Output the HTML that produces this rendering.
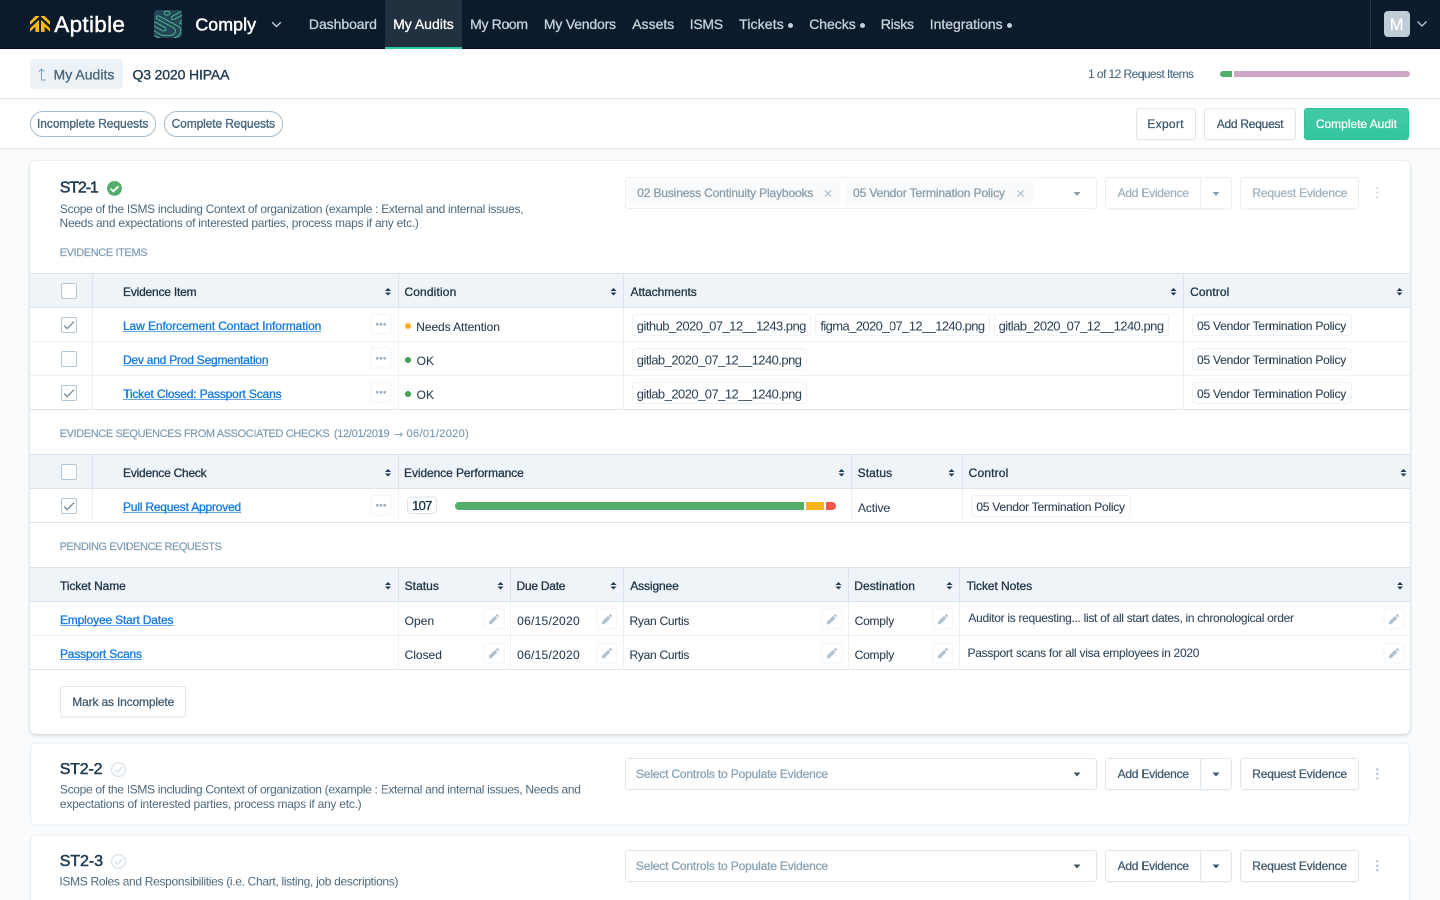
<!DOCTYPE html>
<html lang="en"><head>
<meta charset="utf-8">
<title>Q3 2020 HIPAA - Aptible Comply</title>
<style>
*{box-sizing:border-box;margin:0;padding:0}
html,body{width:1440px;height:900px;overflow:hidden}
body{background:#f9fbfc;position:relative}
#p{position:absolute;left:0;top:0;width:2880px;height:1800px;transform:scale(.5);transform-origin:0 0;will-change:transform}
#z{zoom:2;position:absolute;left:0;top:0;width:1440px;height:900px;overflow:hidden;font-family:"Liberation Sans",Arial,sans-serif;font-size:12px;color:#213547;background:#f9fbfc}
a{color:#1279e0;text-decoration:none;background:linear-gradient(#2f8ae4,#2f8ae4) 0 12px/100% .75px no-repeat}
.t{position:absolute;white-space:nowrap;line-height:normal;left:0;top:0;-webkit-text-stroke:0.3px}
svg{position:absolute;overflow:visible}
i{position:absolute;display:block}
/* NAV */
#nav{position:absolute;left:0;top:0;width:1440px;height:49px;background:#0b1b2b;border-bottom:1px solid #030a1c}
#nav .brand{font-size:22.4px;color:#fff;-webkit-text-stroke:0.45px}
#nav .prod{font-size:17.8px;color:#fff;-webkit-text-stroke:0.5px}
#nav .n{font-size:14px;color:#c7d1da}
#nav .tab{position:absolute;left:385px;top:0;width:77px;height:49px;background:#223140;border-bottom:2px solid #2cc8a0}
#nav .tab .n{color:#fff}
#nav .bul{width:5px;height:5px;border-radius:3px;background:#c7d1da;top:23px}
#nav .div{left:1370px;top:0;width:1px;height:48px;background:#1c3a55}
#nav .av{position:absolute;left:1384px;top:11px;width:26px;height:26px;border-radius:4px;background:#bfccd6}
#nav .av .t{color:#fff;font-size:16.5px;-webkit-text-stroke:.2px}
/* SUBHEADER */
#sub{position:absolute;left:0;top:49px;width:1440px;height:50px;background:#fff;border-bottom:1px solid #dde6ed}
#sub .back{position:absolute;left:30px;top:10px;width:93px;height:30px;border-radius:4px;background:#edf2f7}
#sub .back .t{font-size:14px;color:#47667e}
#sub .title{font-size:14px;color:#1e384e;-webkit-text-stroke:.35px}
#sub .cnt{font-size:12px;color:#4a6a82;-webkit-text-stroke:.1px}
#sub .pg{left:1220px;top:22px;height:6px}
/* TOOLBAR */
#tool{position:absolute;left:0;top:99px;width:1440px;height:50px;background:#fff;border-bottom:1px solid #dde6ed}
.pill{position:absolute;top:12px;height:26px;border:1px solid #a9bccb;border-radius:13px;background:#fff}
.pill .t{color:#47667e}
.btn{position:absolute;height:32px;border:1px solid #dde6ed;border-radius:3px;background:#fff;box-shadow:0 1px 1px rgba(30,60,90,.04)}
.btn .t{color:#3d586e;-webkit-text-stroke:.25px}
.btn.primary{background:linear-gradient(#42caa5,#32c59f);border-color:#30c39c}
.btn.primary .t{color:#fff}
.btn.dis{border-color:#eaeff4}
.btn.dis .t{color:#9fb0be}
.btn .sep{top:0;width:1px;height:30px;background:#dde6ed}
.btn.dis .sep{background:#eaeff4}
/* CARDS */
.card{position:absolute;left:30px;width:1380px;background:#fff;border-radius:6px;border:1px solid #e9eef3}
.card h2{font-size:16px;font-weight:normal;color:#1e3a51;-webkit-text-stroke:.5px}
.card .desc{font-size:12px;color:#4d697f;-webkit-text-stroke:0}
.lbl{font-size:11px;color:#7b99b1;-webkit-text-stroke:.15px}
.sel{position:absolute;left:594px;width:472px;height:32px;border:1px solid #dde6ed;border-radius:3px;background:#fff}
.sel.dis{border-color:#eaeff4}
.sel .ph{color:#8ba3b6}
.sel .tag{position:absolute;top:3px;height:24px;background:#f8fafb;border-radius:2px}
.sel .tag .t{color:#8b9dab}
.caret{width:0;height:0;border-left:3.5px solid transparent;border-right:3.5px solid transparent;border-top:4px solid #3f566a}
.dis .caret{border-top-color:#8b9dab}
.kb{width:2.5px;height:2.5px;border-radius:1.25px;background:#b9c7d3}
/* TABLES */
.th{position:absolute;left:0;top:0;width:1380px;height:35px;background:#eff4f8;border:1px solid #dbe4ec;border-left:0;border-right:0}
.th .t{color:#213547}
.th .v{top:0;width:1px;height:33px;background:#dbe4ec}
.tr{position:absolute;left:0;width:1380px;height:34px;border-bottom:1px solid #edf1f5}
.tr.last{border-bottom-color:#dbe4ec}
.tr .v{top:0;width:1px;height:33px;background:#edf1f5}
.tr .t{color:#2b4055}
.tr a.t{color:#1279e0}
.s13{font-size:13px;-webkit-text-stroke:0}
.lt{-webkit-text-stroke:.1px}
.cb{position:absolute;left:31px;width:16px;height:16px;border:1px solid #b5c6d4;border-radius:2px;background:#fff}
.mini{position:absolute;width:21px;height:21px;border:1px solid #eef2f6;border-radius:3px;background:#fff}
.chip{position:absolute;height:22px;border:1px solid #eff2f6;border-radius:3px;background:#fff}
.dot{width:6px;height:6px;border-radius:3px}
.so{width:6px;height:8px}
.so:before,.so:after{content:"";position:absolute;left:0;border-left:3px solid transparent;border-right:3px solid transparent}
.so:before{top:0;border-bottom:3.2px solid #1f3a52}
.so:after{top:4.6px;border-top:3.2px solid #1f3a52}
</style>
</head>
<body>
<div id="p"><div id="z">
<div id="nav">
  <svg width="20" height="16" viewBox="0 0 20 16" style="left: 30px; top: 16px;"><g fill="#ffb80f"><path d="M0 5.500 5.400 0H9v.8L0 9z"></path><path d="M0 12.400 9 3.900V16H5.400v-5.200L0 15.800z"></path><path d="M20 5.500 14.600 0H11v.8l9 8.200z"></path><path d="M20 12.400 11 3.900V16h3.600v-5.200l5.400 5z"></path></g></svg>
  <span class="t brand" style="letter-spacing: 0.35px; left: 54.3px; top: 11.6px;">Aptible</span>
  <svg width="28" height="28" viewBox="0 0 28 28" style="overflow: hidden; border-radius: 3.5px; left: 154px; top: 10px;"><rect width="28" height="28" fill="#234659"></rect><g fill="none" stroke="#58c595" stroke-width=".85" stroke-linecap="round"><rect x="10.2" y="1.3" width="5.6" height="3.8" rx="1.9"></rect><path d="M2.4 8.6c-.8-1.400 .6-3.400 2.600-2.600L24.200 16.200c2.600 1.500 2.900 4.300 2.200 6.600-.9 2.600-3.300 4.400-6 5"></path><path d="M2.400 8.600 19 17.400c2.600 1.500 2.900 3.900 1.800 5.600-1 1.600-2.600 2.300-4.500 2.300H9c-.9 0-1.700-.3-2.500-.7L0 20.700"></path><path d="M0 12.600c.8-.3 1.500-.3 2.300.1l8.600 4.700c1.300.8 1.300 2.600-.2 3.300-.9.400-1.700.3-2.500-.1L0 16"></path><path d="M0 25.300l3.200 1.800c.7.400 1.400.6 2.200.6"></path><path d="M27.400 1.200 18.300 6.400c-1.500 1-.9 3.100 1 3.100.6 0 1-.2 1.500-.5L28 5.200"></path><path d="M28 10.400l-1.500.9c-1.100.8-.8 2.200.6 2.600l.9.200"></path></g></svg>
  <span class="t prod" style="letter-spacing: 0.07px; left: 195.37px; top: 14.6px;">Comply</span>
  <svg width="10" height="6" viewBox="0 0 10 6" style="left: 271.5px; top: 21.5px;"><path d="M.7.700 5 5 9.300.700" fill="none" stroke="#c3d0db" stroke-width="1.400"></path></svg>
  <span class="t n" style="letter-spacing: -0.06px; left: 308.91px; top: 16.7px;">Dashboard</span>
  <div class="tab"><span class="t n" style="letter-spacing: -0.01px; left: 8.11px; top: 16.7px;">My Audits</span></div>
  <span class="t n" style="letter-spacing: -0.33px; left: 470.11px; top: 16.7px;">My Room</span>
  <span class="t n" style="letter-spacing: -0.2px; left: 543.91px; top: 16.7px;">My Vendors</span>
  <span class="t n" style="letter-spacing: 0.02px; left: 632.2px; top: 16.7px;">Assets</span>
  <span class="t n" style="letter-spacing: -0.28px; left: 689.71px; top: 16.7px;">ISMS</span>
  <span class="t n" style="letter-spacing: 0.12px; left: 739.18px; top: 16.7px;">Tickets</span><i class="bul" style="left: 788px;"></i>
  <span class="t n" style="letter-spacing: -0.04px; left: 809.24px; top: 16.7px;">Checks</span><i class="bul" style="left: 860px;"></i>
  <span class="t n" style="letter-spacing: -0.25px; left: 880.81px; top: 16.7px;">Risks</span>
  <span class="t n" style="letter-spacing: -0.02px; left: 929.71px; top: 16.7px;">Integrations</span><i class="bul" style="left: 1007px;"></i>
  <i class="div"></i>
  <div class="av"><span class="t" style="left: 5.81px; top: 4px;">M</span></div>
  <svg width="10" height="6" viewBox="0 0 10 6" style="left: 1417px; top: 21.2px;"><path d="M.5.500 5 5 9.500.500" fill="none" stroke="#bccad6" stroke-width="1.300"></path></svg>
</div>
<div id="sub">
  <div class="back">
    <svg width="9" height="13" viewBox="0 0 9 13" style="left: 8px; top: 9px;"><path d="M.8 3.700 3.500 1 6.200 3.700M3.500 1.200V12H8" fill="none" stroke="#7f9db5" stroke-width="1"></path></svg>
    <span class="t" style="letter-spacing: 0.03px; left: 23.51px; top: 7.9px;">My Audits</span>
  </div>
  <span class="t title" style="letter-spacing: -0.13px; left: 132.44px; top: 17.9px;">Q3 2020 HIPAA</span>
  <span class="t cnt" style="letter-spacing: -0.57px; left: 1088.05px; top: 17.8px;">1 of 12 Request Items</span>
  <i style="width: 12px; height: 6px; background: rgb(82, 174, 104); border-radius: 3px 0px 0px 3px; left: 1220px; top: 22px;"></i>
  <i style="width: 176px; height: 6px; background: rgb(207, 166, 198); border-radius: 0px 3px 3px 0px; left: 1234px; top: 22px;"></i>
</div>
<div id="tool">
  <div class="pill" style="width: 126px; left: 30px; top: 12px;"><span class="t" style="letter-spacing: -0.08px; left: 6.06px; top: 4.6px;">Incomplete Requests</span></div>
  <div class="pill" style="width: 119px; left: 164px; top: 12px;"><span class="t" style="letter-spacing: -0.12px; left: 6.64px; top: 4.6px;">Complete Requests</span></div>
  <div class="btn" style="width: 60px; left: 1136px; top: 9px;"><span class="t" style="letter-spacing: 0.3px; left: 10.36px; top: 7.8px;">Export</span></div>
  <div class="btn" style="width: 92px; left: 1204px; top: 9px;"><span class="t" style="letter-spacing: -0.25px; left: 11.7px; top: 7.8px;">Add Request</span></div>
  <div class="btn primary" style="width: 105px; left: 1304px; top: 9px;"><span class="t" style="letter-spacing: -0.02px; left: 10.84px; top: 7.8px;">Complete Audit</span></div>
</div>
<div class="card" id="c1" style="height: 573.5px; border: 0px; box-shadow: rgb(214, 221, 228) 0px 0px 0px 0.5px, rgba(30, 50, 70, 0.2) 0px 1.5px 3px; left: 30px; top: 160.5px;">
<h2 class="t" style="letter-spacing: -1.11px; left: 29.7px; top: 17.7px;">ST2-1</h2>
<svg width="15" height="15" viewBox="0 0 15 15" style="left: 77px; top: 20.5px;"><circle cx="7.500" cy="7.400" r="7.400" fill="#52ae68"></circle><path d="M3.500 7.700 6.300 10.300 11.500 5.300" fill="none" stroke="#fff" stroke-width="1.800"></path></svg>
<p class="t desc" style="letter-spacing: -0.3px; left: 29.92px; top: 41.6px;">Scope of the ISMS including Context of organization (example : External and internal issues,</p>
<p class="t desc" style="letter-spacing: -0.26px; left: 29.56px; top: 55.6px;">Needs and expectations of interested parties, process maps if any etc.)</p>
<span class="t lbl" style="letter-spacing: -0.38px; left: 29.64px; top: 85.5px;">EVIDENCE ITEMS</span>
<div class="sel dis" style="left: 595px; top: 16.5px;">
<div class="tag" style="width: 212px; left: 3px; top: 3px;"><span class="t" style="letter-spacing: -0.15px; left: 8.23px; top: 5.2px;">02 Business Continuity Playbooks</span><svg width="7" height="7" viewBox="0 0 7 7" style="left: 195.6px; top: 9px;"><path d="M.3.300 6.700 6.700M6.700.300.3 6.700" fill="none" stroke="#afc0cd" stroke-width="1.200"></path></svg></div>
<div class="tag" style="width: 188px; left: 219px; top: 3px;"><span class="t" style="letter-spacing: -0.12px; left: 8.02px; top: 5.2px;">05 Vendor Termination Policy</span><svg width="7" height="7" viewBox="0 0 7 7" style="left: 172px; top: 9px;"><path d="M.3.300 6.700 6.700M6.700.300.3 6.700" fill="none" stroke="#afc0cd" stroke-width="1.200"></path></svg></div>
<i class="caret" style="left: 447.5px; top: 14px;"></i>
</div>
<div class="btn dis" style="width: 127px; left: 1075px; top: 16.5px;"><span class="t" style="letter-spacing: -0.24px; left: 11.6px; top: 7.9px;">Add Evidence</span><i class="sep" style="left: 94px;"></i><i class="caret" style="left: 106.5px; top: 14px;"></i></div>
<div class="btn dis" style="width: 119px; left: 1210px; top: 16.5px;"><span class="t" style="letter-spacing: -0.16px; left: 11.36px; top: 7.9px;">Request Evidence</span></div>
<i class="kb" style="background: rgb(217, 225, 232); left: 1345.8px; top: 26.3px;"></i>
<i class="kb" style="background: rgb(217, 225, 232); left: 1345.8px; top: 30.8px;"></i>
<i class="kb" style="background: rgb(217, 225, 232); left: 1345.8px; top: 35.3px;"></i>
<div class="th" style="left: 0px; top: 112.5px;">
<i class="v" style="left: 62px;"></i>
<i class="v" style="left: 368px;"></i>
<i class="v" style="left: 593px;"></i>
<i class="v" style="left: 1153px;"></i>
<span class="t" style="letter-spacing: -0.21px; left: 93.06px; top: 10.9px;">Evidence Item</span>
<i class="so" style="left: 355.2px; top: 13.8px;"></i>
<span class="t" style="letter-spacing: 0.14px; left: 374.44px; top: 10.9px;">Condition</span>
<i class="so" style="left: 580.5px; top: 13.8px;"></i>
<span class="t" style="letter-spacing: -0.04px; left: 600.5px; top: 10.9px;">Attachments</span>
<i class="so" style="left: 1140.5px; top: 13.8px;"></i>
<span class="t" style="letter-spacing: 0.08px; left: 1160.14px; top: 10.9px;">Control</span>
<i class="so" style="left: 1366.5px; top: 13.8px;"></i>
<div class="cb" style="left: 31px; top: 9px;"></div>
</div>
<div class="tr" style="left: 0px; top: 147.5px;">
<i class="v" style="left: 62px;"></i>
<i class="v" style="left: 368px;"></i>
<i class="v" style="left: 593px;"></i>
<i class="v" style="left: 1153px;"></i>
<div class="cb" style="left: 31px; top: 9px;"><svg width="10" height="8" viewBox="0 0 10 8" style="left: 2px; top: 3.6px;"><path d="M.2 4 3.200 7.100 10 .1" fill="none" stroke="#7f93a3" stroke-width="1.450"></path></svg></div>
<a class="t" style="letter-spacing: -0.09px; left: 92.96px; top: 11.2px;">Law Enforcement Contact Information</a>
<div class="mini" style="left: 340.5px; top: 5.5px;"><svg width="10" height="3" viewBox="0 0 10 3" style="left: 4.6px; top: 8.6px;"><g fill="#9fb2c2"><circle cx="1.3" cy="1.3" r="1.400"></circle><circle cx="5" cy="1.3" r="1.400"></circle><circle cx="8.7" cy="1.3" r="1.400"></circle></g></svg></div>
<i class="dot" style="background: rgb(252, 174, 30); left: 375px; top: 15px;"></i>
<span class="t lt" style="letter-spacing: -0.08px; left: 386.26px; top: 12px;">Needs Attention</span>
<div class="chip" style="width: 179px; left: 602px; top: 6px;"><span class="t s13" style="letter-spacing: -0.54px; left: 3.79px; top: 3.3px;">github_2020_07_12__1243.png</span></div>
<div class="chip" style="width: 175px; left: 785px; top: 6px;"><span class="t s13" style="letter-spacing: -0.61px; left: 4.4px; top: 3.3px;">figma_2020_07_12__1240.png</span></div>
<div class="chip" style="width: 175px; left: 964px; top: 6px;"><span class="t s13" style="letter-spacing: -0.53px; left: 3.59px; top: 3.3px;">gitlab_2020_07_12__1240.png</span></div>
<div class="chip" style="width: 160px; left: 1162px; top: 6px;"><span class="t lt" style="letter-spacing: -0.22px; left: 4.03px; top: 3.9px;">05 Vendor Termination Policy</span></div>
</div>
<div class="tr" style="left: 0px; top: 181.5px;">
<i class="v" style="left: 62px;"></i>
<i class="v" style="left: 368px;"></i>
<i class="v" style="left: 593px;"></i>
<i class="v" style="left: 1153px;"></i>
<div class="cb" style="left: 31px; top: 9px;"></div>
<a class="t" style="letter-spacing: -0.22px; left: 92.96px; top: 11.2px;">Dev and Prod Segmentation</a>
<div class="mini" style="left: 340.5px; top: 5.5px;"><svg width="10" height="3" viewBox="0 0 10 3" style="left: 4.6px; top: 8.6px;"><g fill="#9fb2c2"><circle cx="1.3" cy="1.3" r="1.400"></circle><circle cx="5" cy="1.3" r="1.400"></circle><circle cx="8.7" cy="1.3" r="1.400"></circle></g></svg></div>
<i class="dot" style="background: rgb(63, 159, 76); left: 375px; top: 15px;"></i>
<span class="t lt" style="letter-spacing: 0.05px; left: 386.64px; top: 12px;">OK</span>
<div class="chip" style="width: 175px; left: 602px; top: 6px;"><span class="t s13" style="letter-spacing: -0.54px; left: 3.79px; top: 3.3px;">gitlab_2020_07_12__1240.png</span></div>
<div class="chip" style="width: 160px; left: 1162px; top: 6px;"><span class="t lt" style="letter-spacing: -0.22px; left: 4.03px; top: 3.9px;">05 Vendor Termination Policy</span></div>
</div>
<div class="tr last" style="left: 0px; top: 215.5px;">
<i class="v" style="left: 62px;"></i>
<i class="v" style="left: 368px;"></i>
<i class="v" style="left: 593px;"></i>
<i class="v" style="left: 1153px;"></i>
<div class="cb" style="left: 31px; top: 9px;"><svg width="10" height="8" viewBox="0 0 10 8" style="left: 2px; top: 3.6px;"><path d="M.2 4 3.200 7.100 10 .1" fill="none" stroke="#7f93a3" stroke-width="1.450"></path></svg></div>
<a class="t" style="letter-spacing: -0.16px; left: 93.11px; top: 11.2px;">Ticket Closed: Passport Scans</a>
<div class="mini" style="left: 340.5px; top: 5.5px;"><svg width="10" height="3" viewBox="0 0 10 3" style="left: 4.6px; top: 8.6px;"><g fill="#9fb2c2"><circle cx="1.3" cy="1.3" r="1.400"></circle><circle cx="5" cy="1.3" r="1.400"></circle><circle cx="8.7" cy="1.3" r="1.400"></circle></g></svg></div>
<i class="dot" style="background: rgb(63, 159, 76); left: 375px; top: 15px;"></i>
<span class="t lt" style="letter-spacing: 0.05px; left: 386.64px; top: 12px;">OK</span>
<div class="chip" style="width: 175px; left: 602px; top: 6px;"><span class="t s13" style="letter-spacing: -0.54px; left: 3.79px; top: 3.3px;">gitlab_2020_07_12__1240.png</span></div>
<div class="chip" style="width: 160px; left: 1162px; top: 6px;"><span class="t lt" style="letter-spacing: -0.22px; left: 4.03px; top: 3.9px;">05 Vendor Termination Policy</span></div>
</div>
<span class="t lbl" style="letter-spacing: -0.38px; left: 29.64px; top: 266.7px;">EVIDENCE SEQUENCES FROM ASSOCIATED CHECKS</span>
<span class="t lbl" style="letter-spacing: -0.3px; left: 303.88px; top: 266.7px;">(12/01/2019</span>
<span class="t lbl" style="font-family: &quot;DejaVu Sans&quot;, sans-serif; font-size: 11px; -webkit-text-stroke: 0px; left: 364.08px; top: 267.5px;">→</span>
<span class="t lbl" style="letter-spacing: 0.35px; left: 376.56px; top: 266.7px;">06/01/2020)</span>
<div class="th" style="left: 0px; top: 293.5px;">
<i class="v" style="left: 62px;"></i>
<i class="v" style="left: 368px;"></i>
<i class="v" style="left: 821px;"></i>
<i class="v" style="left: 932px;"></i>
<span class="t" style="letter-spacing: -0.24px; left: 93.06px; top: 10.9px;">Evidence Check</span>
<i class="so" style="left: 355.2px; top: 13.8px;"></i>
<span class="t" style="letter-spacing: -0.09px; left: 374.06px; top: 10.9px;">Evidence Performance</span>
<i class="so" style="left: 808.5px; top: 13.8px;"></i>
<span class="t" style="letter-spacing: 0.09px; left: 827.63px; top: 10.9px;">Status</span>
<i class="so" style="left: 918.5px; top: 13.8px;"></i>
<span class="t" style="letter-spacing: 0.16px; left: 938.64px; top: 10.9px;">Control</span>
<i class="so" style="left: 1370.5px; top: 13.8px;"></i>
<div class="cb" style="left: 31px; top: 9px;"></div>
</div>
<div class="tr last" style="left: 0px; top: 328.5px;">
<i class="v" style="left: 62px;"></i>
<i class="v" style="left: 368px;"></i>
<i class="v" style="left: 821px;"></i>
<i class="v" style="left: 932px;"></i>
<div class="cb" style="left: 31px; top: 9px;"><svg width="10" height="8" viewBox="0 0 10 8" style="left: 2px; top: 3.6px;"><path d="M.2 4 3.200 7.100 10 .1" fill="none" stroke="#7f93a3" stroke-width="1.450"></path></svg></div>
<a class="t" style="letter-spacing: -0.19px; left: 92.96px; top: 11.2px;">Pull Request Approved</a>
<div class="mini" style="left: 340.5px; top: 5.5px;"><svg width="10" height="3" viewBox="0 0 10 3" style="left: 4.6px; top: 8.6px;"><g fill="#9fb2c2"><circle cx="1.3" cy="1.3" r="1.400"></circle><circle cx="5" cy="1.3" r="1.400"></circle><circle cx="8.7" cy="1.3" r="1.400"></circle></g></svg></div>
<div class="chip" style="width: 30px; height: 17.5px; border-color: rgb(219, 228, 236); border-radius: 3.5px; left: 377px; top: 7.5px;"><span class="t s13" style="-webkit-text-stroke: 0.35px; color: rgb(27, 56, 80); letter-spacing: -0.73px; left: 4.09px; top: 0.7px;">107</span></div>
<i style="width: 349px; height: 8px; background: rgb(82, 174, 104); border-radius: 4px 0px 0px 4px; left: 425px; top: 13px;"></i>
<i style="width: 18px; height: 8px; background: rgb(249, 179, 31); left: 776px; top: 13px;"></i>
<i style="width: 10px; height: 8px; background: rgb(239, 85, 76); border-radius: 0px 4px 4px 0px; left: 796px; top: 13px;"></i>
<span class="t lt" style="letter-spacing: -0.12px; left: 828px; top: 12px;">Active</span>
<div class="chip" style="width: 160px; left: 941px; top: 6px;"><span class="t lt" style="letter-spacing: -0.24px; left: 4.33px; top: 3.9px;">05 Vendor Termination Policy</span></div>
</div>
<span class="t lbl" style="letter-spacing: -0.45px; left: 29.64px; top: 379.5px;">PENDING EVIDENCE REQUESTS</span>
<div class="th" style="left: 0px; top: 406.5px;">
<i class="v" style="left: 368px;"></i>
<i class="v" style="left: 480px;"></i>
<i class="v" style="left: 593px;"></i>
<i class="v" style="left: 818px;"></i>
<i class="v" style="left: 929px;"></i>
<span class="t" style="letter-spacing: -0.11px; left: 30.01px; top: 10.9px;">Ticket Name</span>
<i class="so" style="left: 355.2px; top: 13.8px;"></i>
<span class="t" style="letter-spacing: 0.05px; left: 374.63px; top: 10.9px;">Status</span>
<i class="so" style="left: 467.5px; top: 13.8px;"></i>
<span class="t" style="letter-spacing: -0.24px; left: 486.46px; top: 10.9px;">Due Date</span>
<i class="so" style="left: 580.5px; top: 13.8px;"></i>
<span class="t" style="letter-spacing: -0.13px; left: 600.3px; top: 10.9px;">Assignee</span>
<i class="so" style="left: 805.5px; top: 13.8px;"></i>
<span class="t" style="letter-spacing: 0.06px; left: 824.26px; top: 10.9px;">Destination</span>
<i class="so" style="left: 916.5px; top: 13.8px;"></i>
<span class="t" style="letter-spacing: -0.07px; left: 936.61px; top: 10.9px;">Ticket Notes</span>
<i class="so" style="left: 1367px; top: 13.8px;"></i>
</div>
<div class="tr" style="left: 0px; top: 441.5px;">
<i class="v" style="left: 368px;"></i>
<i class="v" style="left: 480px;"></i>
<i class="v" style="left: 593px;"></i>
<i class="v" style="left: 818px;"></i>
<i class="v" style="left: 929px;"></i>
<a class="t" style="letter-spacing: -0.17px; left: 29.96px; top: 11.2px;">Employee Start Dates</a>
<span class="t lt" style="letter-spacing: 0.06px; left: 374.64px; top: 12px;">Open</span>
<div class="mini" style="left: 453.5px; top: 6.5px;"><svg width="10" height="10" viewBox="0 0 10 10" style="left: 4.5px; top: 4.5px;"><path d="M0 10.200V7.800L6.100 1.800 8.400 4.200 2.400 10.200zM6.800 1.200 7.700.3c.3-.3.700-.3 1 0l1.200 1.200c.3.300.3.700 0 1l-.9.900z" fill="#b1c1ce"></path></svg></div>
<span class="t lt" style="letter-spacing: 0.27px; left: 487.13px; top: 12.2px;">06/15/2020</span>
<div class="mini" style="left: 566.5px; top: 6.5px;"><svg width="10" height="10" viewBox="0 0 10 10" style="left: 4.5px; top: 4.5px;"><path d="M0 10.200V7.800L6.100 1.800 8.400 4.200 2.400 10.200zM6.800 1.200 7.700.3c.3-.3.700-.3 1 0l1.200 1.200c.3.300.3.700 0 1l-.9.900z" fill="#b1c1ce"></path></svg></div>
<span class="t lt" style="letter-spacing: -0.29px; left: 599.56px; top: 12px;">Ryan Curtis</span>
<div class="mini" style="left: 791.5px; top: 6.5px;"><svg width="10" height="10" viewBox="0 0 10 10" style="left: 4.5px; top: 4.5px;"><path d="M0 10.200V7.800L6.100 1.800 8.400 4.200 2.400 10.200zM6.800 1.200 7.700.3c.3-.3.700-.3 1 0l1.200 1.200c.3.300.3.700 0 1l-.9.900z" fill="#b1c1ce"></path></svg></div>
<span class="t lt" style="letter-spacing: -0.22px; left: 824.64px; top: 12px;">Comply</span>
<div class="mini" style="left: 902.5px; top: 6.5px;"><svg width="10" height="10" viewBox="0 0 10 10" style="left: 4.5px; top: 4.5px;"><path d="M0 10.200V7.800L6.100 1.800 8.400 4.200 2.400 10.200zM6.800 1.200 7.700.3c.3-.3.700-.3 1 0l1.200 1.200c.3.300.3.700 0 1l-.9.900z" fill="#b1c1ce"></path></svg></div>
<span class="t lt" style="color: rgb(51, 73, 93); letter-spacing: -0.3px; left: 938.4px; top: 9px;">Auditor is requesting... list of all start dates, in chronological order</span>
<div class="mini" style="left: 1353.5px; top: 6.5px;"><svg width="10" height="10" viewBox="0 0 10 10" style="left: 4.5px; top: 4.5px;"><path d="M0 10.200V7.800L6.100 1.800 8.400 4.200 2.400 10.200zM6.800 1.200 7.700.3c.3-.3.700-.3 1 0l1.200 1.200c.3.300.3.700 0 1l-.9.900z" fill="#b1c1ce"></path></svg></div>
</div>
<div class="tr last" style="left: 0px; top: 475.5px;">
<i class="v" style="left: 368px;"></i>
<i class="v" style="left: 480px;"></i>
<i class="v" style="left: 593px;"></i>
<i class="v" style="left: 818px;"></i>
<i class="v" style="left: 929px;"></i>
<a class="t" style="letter-spacing: -0.15px; left: 29.96px; top: 11.2px;">Passport Scans</a>
<span class="t lt" style="letter-spacing: -0.02px; left: 374.64px; top: 12px;">Closed</span>
<div class="mini" style="left: 453.5px; top: 6.5px;"><svg width="10" height="10" viewBox="0 0 10 10" style="left: 4.5px; top: 4.5px;"><path d="M0 10.200V7.800L6.100 1.800 8.400 4.200 2.400 10.200zM6.800 1.200 7.700.3c.3-.3.700-.3 1 0l1.200 1.200c.3.300.3.700 0 1l-.9.900z" fill="#b1c1ce"></path></svg></div>
<span class="t lt" style="letter-spacing: 0.27px; left: 487.13px; top: 12.2px;">06/15/2020</span>
<div class="mini" style="left: 566.5px; top: 6.5px;"><svg width="10" height="10" viewBox="0 0 10 10" style="left: 4.5px; top: 4.5px;"><path d="M0 10.200V7.800L6.100 1.800 8.400 4.200 2.400 10.200zM6.800 1.200 7.700.3c.3-.3.700-.3 1 0l1.200 1.200c.3.300.3.700 0 1l-.9.900z" fill="#b1c1ce"></path></svg></div>
<span class="t lt" style="letter-spacing: -0.29px; left: 599.56px; top: 12px;">Ryan Curtis</span>
<div class="mini" style="left: 791.5px; top: 6.5px;"><svg width="10" height="10" viewBox="0 0 10 10" style="left: 4.5px; top: 4.5px;"><path d="M0 10.200V7.800L6.100 1.800 8.400 4.200 2.400 10.200zM6.800 1.200 7.700.3c.3-.3.700-.3 1 0l1.200 1.200c.3.300.3.700 0 1l-.9.900z" fill="#b1c1ce"></path></svg></div>
<span class="t lt" style="letter-spacing: -0.22px; left: 824.64px; top: 12px;">Comply</span>
<div class="mini" style="left: 902.5px; top: 6.5px;"><svg width="10" height="10" viewBox="0 0 10 10" style="left: 4.5px; top: 4.5px;"><path d="M0 10.200V7.800L6.100 1.800 8.400 4.200 2.400 10.200zM6.800 1.200 7.700.3c.3-.3.700-.3 1 0l1.200 1.200c.3.300.3.700 0 1l-.9.900z" fill="#b1c1ce"></path></svg></div>
<span class="t lt" style="color: rgb(51, 73, 93); letter-spacing: -0.26px; left: 937.46px; top: 10px;">Passport scans for all visa employees in 2020</span>
<div class="mini" style="left: 1353.5px; top: 6.5px;"><svg width="10" height="10" viewBox="0 0 10 10" style="left: 4.5px; top: 4.5px;"><path d="M0 10.200V7.800L6.100 1.800 8.400 4.200 2.400 10.200zM6.800 1.200 7.700.3c.3-.3.700-.3 1 0l1.200 1.200c.3.300.3.700 0 1l-.9.900z" fill="#b1c1ce"></path></svg></div>
</div>
<div class="btn" style="width: 126px; height: 31.5px; left: 30px; top: 525.5px;"><span class="t" style="letter-spacing: -0.16px; left: 11.26px; top: 7.8px;">Mark as Incomplete</span></div>
</div>
<div class="card" style="height: 83px; left: 30px; top: 742.5px;">
<h2 class="t" style="letter-spacing: -0.18px; left: 28.7px; top: 16px;">ST2-2</h2>
<svg width="15" height="15" viewBox="0 0 15 15" style="left: 80px; top: 18.5px;"><circle cx="7.500" cy="7.500" r="6.900" fill="none" stroke="#d9e2e9" stroke-width="1.250"></circle><path d="M3.700 7.700 6.300 10.300 11.300 5" fill="none" stroke="#d9e2e9" stroke-width="1.500"></path></svg>
<p class="t desc" style="letter-spacing: -0.31px; left: 28.92px; top: 39px;">Scope of the ISMS including Context of organization (example : External and internal issues, Needs and</p>
<p class="t desc" style="letter-spacing: -0.24px; left: 28.92px; top: 53.3px;">expectations of interested parties, process maps if any etc.)</p>
<div class="sel" style="left: 594px; top: 14.5px;"><span class="t ph" style="letter-spacing: -0.17px; left: 9.92px; top: 8.2px;">Select Controls to Populate Evidence</span><i class="caret" style="left: 447.5px; top: 13.5px;"></i></div>
<div class="btn" style="width: 127px; left: 1074px; top: 14.5px;"><span class="t" style="letter-spacing: -0.24px; left: 11.6px; top: 8.2px;">Add Evidence</span><i class="sep" style="left: 94px;"></i><i class="caret" style="left: 106.5px; top: 13.5px;"></i></div>
<div class="btn" style="width: 119px; left: 1209px; top: 14.5px;"><span class="t" style="letter-spacing: -0.17px; left: 11.26px; top: 8.2px;">Request Evidence</span></div>
<i class="kb" style="left: 1344.8px; top: 24.3px;"></i>
<i class="kb" style="left: 1344.8px; top: 28.8px;"></i>
<i class="kb" style="left: 1344.8px; top: 33.3px;"></i>
</div>
<div class="card" style="height: 83px; left: 30px; top: 834.5px;">
<h2 class="t" style="letter-spacing: -0.06px; left: 28.7px; top: 16px;">ST2-3</h2>
<svg width="15" height="15" viewBox="0 0 15 15" style="left: 80px; top: 18.5px;"><circle cx="7.500" cy="7.500" r="6.900" fill="none" stroke="#d9e2e9" stroke-width="1.250"></circle><path d="M3.700 7.700 6.300 10.300 11.300 5" fill="none" stroke="#d9e2e9" stroke-width="1.500"></path></svg>
<p class="t desc" style="letter-spacing: -0.31px; left: 28.36px; top: 39px;">ISMS Roles and Responsibilities (i.e. Chart, listing, job descriptions)</p>
<div class="sel" style="left: 594px; top: 14.5px;"><span class="t ph" style="letter-spacing: -0.17px; left: 9.92px; top: 8.2px;">Select Controls to Populate Evidence</span><i class="caret" style="left: 447.5px; top: 13.5px;"></i></div>
<div class="btn" style="width: 127px; left: 1074px; top: 14.5px;"><span class="t" style="letter-spacing: -0.24px; left: 11.6px; top: 8.2px;">Add Evidence</span><i class="sep" style="left: 94px;"></i><i class="caret" style="left: 106.5px; top: 13.5px;"></i></div>
<div class="btn" style="width: 119px; left: 1209px; top: 14.5px;"><span class="t" style="letter-spacing: -0.17px; left: 11.26px; top: 8.2px;">Request Evidence</span></div>
<i class="kb" style="left: 1344.8px; top: 24.3px;"></i>
<i class="kb" style="left: 1344.8px; top: 28.8px;"></i>
<i class="kb" style="left: 1344.8px; top: 33.3px;"></i>
</div>
</div></div>


</body></html>
